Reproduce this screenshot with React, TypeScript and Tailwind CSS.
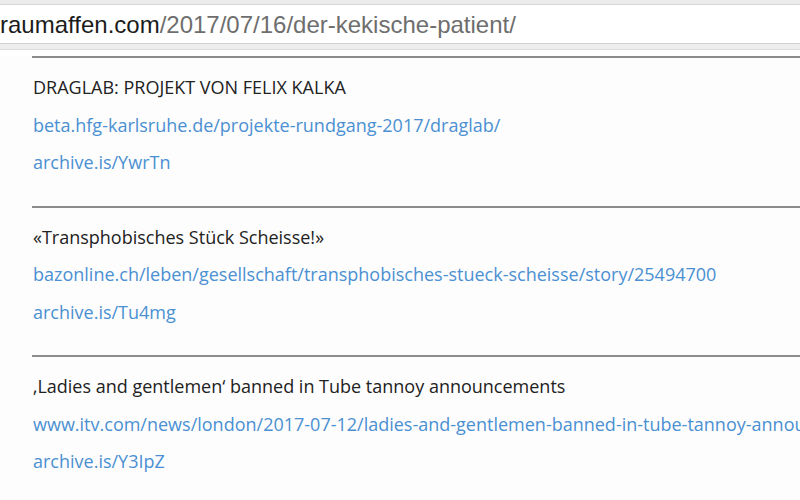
import React from 'react';

interface Entry {
  title: string;
  link: string;
  archive: string;
}

const entries: Entry[] = [
  {
    title: 'DRAGLAB: PROJEKT VON FELIX KALKA',
    link: 'beta.hfg-karlsruhe.de/projekte-rundgang-2017/draglab/',
    archive: 'archive.is/YwrTn',
  },
  {
    title: '«Transphobisches Stück Scheisse!»',
    link: 'bazonline.ch/leben/gesellschaft/transphobisches-stueck-scheisse/story/25494700',
    archive: 'archive.is/Tu4mg',
  },
  {
    title: '‚Ladies and gentlemen‘ banned in Tube tannoy announcements',
    link: 'www.itv.com/news/london/2017-07-12/ladies-and-gentlemen-banned-in-tube-tannoy-announcements/',
    archive: 'archive.is/Y3IpZ',
  },
];

const AddressBar: React.FC = () => (
  <div className="bg-[#f2f2f2]">
    <div className="h-[4px] bg-[#ececec]" />
    <div className="h-[39px] bg-white border-t border-[#d6d6d6] flex items-center pt-[2px] whitespace-nowrap font-['Liberation_Sans',sans-serif] text-[24px]">
      <span className="text-[#1c1c1c]">raumaffen.com</span>
      <span className="text-[#6e6e6e]">/2017/07/16/der-kekische-patient/</span>
    </div>
    <div className="h-[7px] border-t border-[#d0d0d0] border-b border-b-[#dcdcdc] bg-[#ededed]" />
  </div>
);

export default function App() {
  return (
    <div className="w-[800px] h-[500px] overflow-hidden bg-[#fdfdfd] font-['Open_Sans',sans-serif]">
      <AddressBar />
      <div className="h-[6px] bg-white" />
      <div className="pl-[32px]">
        {entries.map((e) => (
          <div key={e.archive} className="border-t-2 border-[#8c8c8c] pt-[11px] pb-[24px]">
            <div className="pl-px text-[18px] whitespace-nowrap overflow-hidden">
              <div className="h-[37.5px] leading-[37.5px] text-[#222]">{e.title}</div>
              <div className="h-[37.5px] leading-[37.5px] text-[#4a90d2]">{e.link}</div>
              <div className="h-[37.5px] leading-[37.5px] text-[#4a90d2]">{e.archive}</div>
            </div>
          </div>
        ))}
      </div>
    </div>
  );
}
